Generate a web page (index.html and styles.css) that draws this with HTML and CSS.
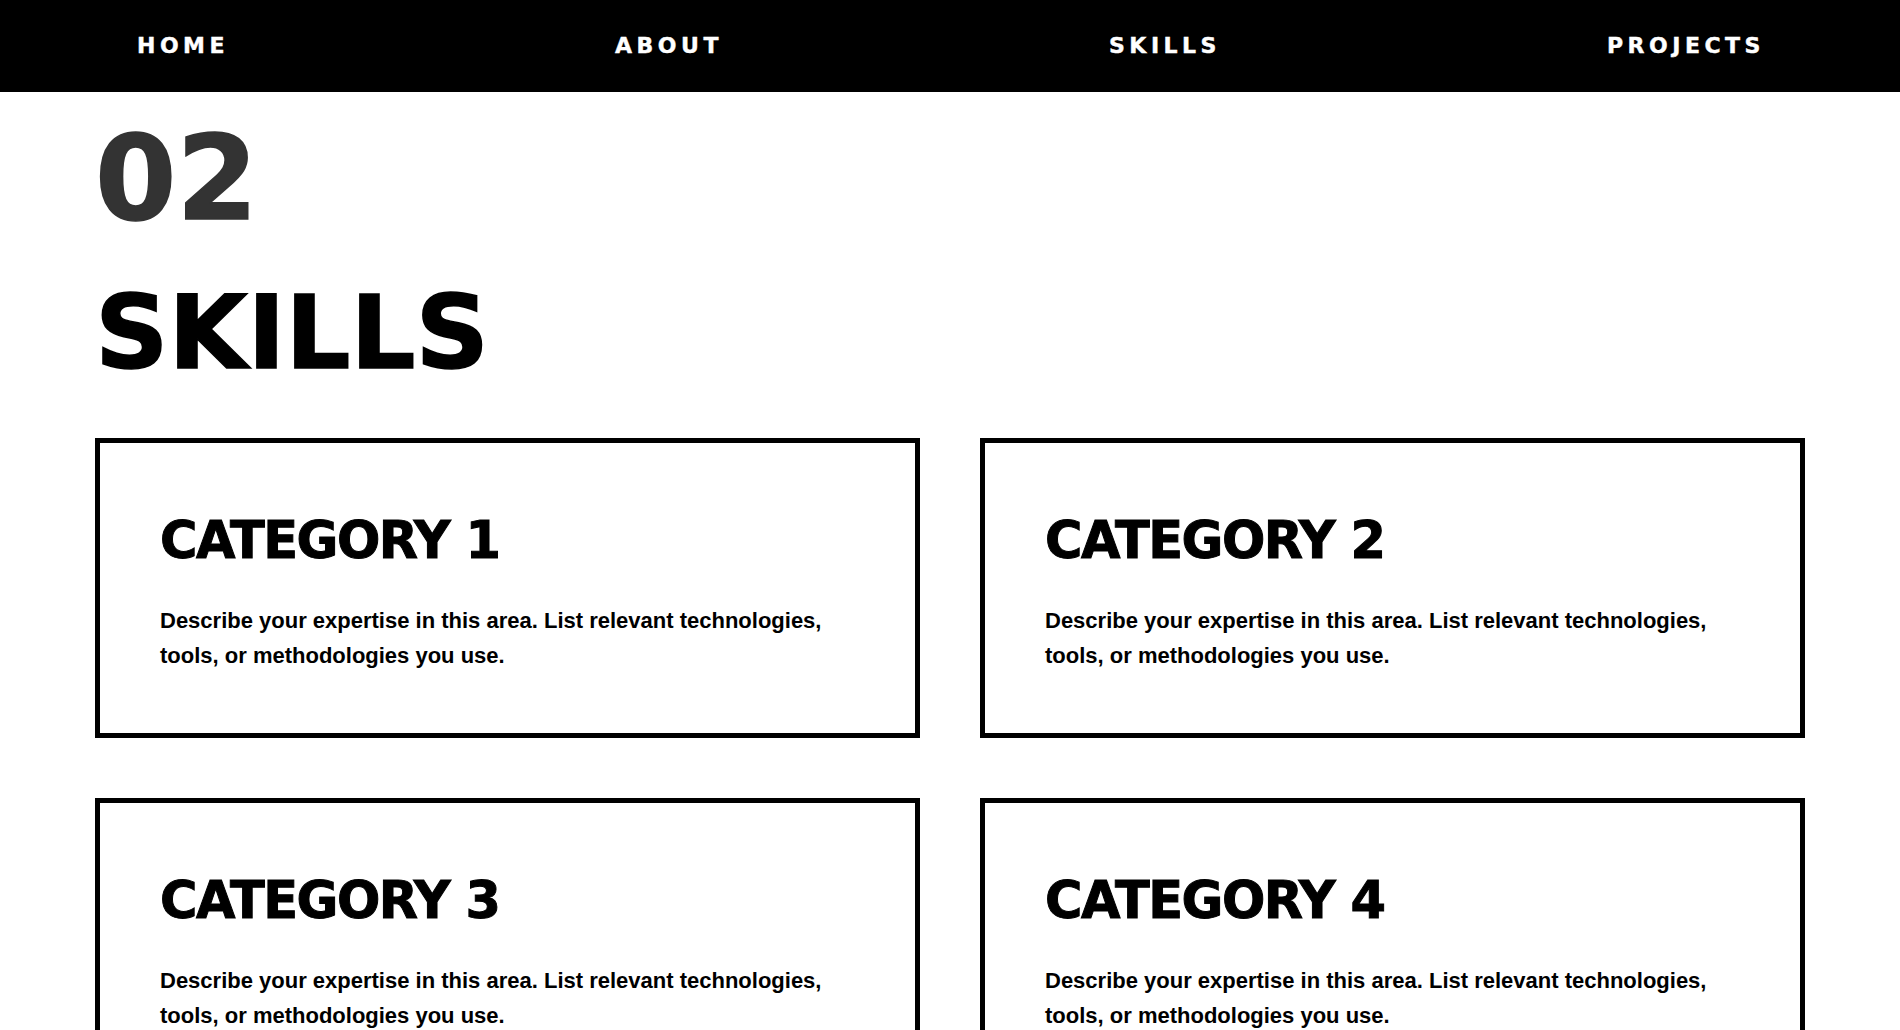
FILE: index.html
```html
<!DOCTYPE html>
<html lang="en">
<head>
<meta charset="utf-8">
<title>Skills</title>
<link rel="stylesheet" href="styles.css">
</head>
<body>
<nav class="topnav">
  <a class="nav-link" href="#home">HOME</a>
  <a class="nav-link" href="#about">ABOUT</a>
  <a class="nav-link" href="#skills">SKILLS</a>
  <a class="nav-link" href="#projects">PROJECTS</a>
</nav>
<section class="skills" id="skills">
  <div class="section-number">02</div>
  <h2 class="section-title">SKILLS</h2>
  <div class="skill-grid">
    <article class="skill-card">
      <h3 class="card-title">CATEGORY 1</h3>
      <p class="card-text">Describe your expertise in this area. List relevant technologies, tools, or methodologies you use.</p>
    </article>
    <article class="skill-card">
      <h3 class="card-title">CATEGORY 2</h3>
      <p class="card-text">Describe your expertise in this area. List relevant technologies, tools, or methodologies you use.</p>
    </article>
    <article class="skill-card">
      <h3 class="card-title">CATEGORY 3</h3>
      <p class="card-text">Describe your expertise in this area. List relevant technologies, tools, or methodologies you use.</p>
    </article>
    <article class="skill-card">
      <h3 class="card-title">CATEGORY 4</h3>
      <p class="card-text">Describe your expertise in this area. List relevant technologies, tools, or methodologies you use.</p>
    </article>
  </div>
</section>
</body>
</html>
```

FILE: styles.css
```css
* {
  box-sizing: border-box;
}

body {
  margin: 0;
  background: #fff;
  color: #000;
  font-family: "Liberation Sans", Arial, sans-serif;
}

.topnav {
  height: 92px;
  background: #000;
  display: flex;
  align-items: center;
  justify-content: space-between;
  padding: 0 135px 0 137px;
}

.nav-link {
  color: #fff;
  text-decoration: none;
  font-family: "DejaVu Sans", sans-serif;
  font-weight: 700;
  font-size: 22px;
  letter-spacing: 4.5px;
  line-height: 1;
  -webkit-text-stroke: 0.4px #fff;
}

.skills {
  padding: 28px 5% 60px;
}

.section-number {
  font-family: "DejaVu Sans", sans-serif;
  font-weight: 700;
  font-size: 117px;
  line-height: 1;
  color: #333;
  -webkit-text-stroke: 1.5px #333;
}

.section-title {
  margin: 45px 0 54px;
  font-family: "DejaVu Sans", sans-serif;
  font-weight: 700;
  font-size: 102px;
  line-height: 1;
  color: #000;
  -webkit-text-stroke: 1.5px #000;
}

.skill-grid {
  display: grid;
  grid-template-columns: 1fr 1fr;
  gap: 60px;
}

.skill-card {
  border: 5px solid #000;
  padding: 67px 60px 60px;
}

.card-title {
  margin: 0 0 32px;
  font-family: "DejaVu Sans", sans-serif;
  font-weight: 700;
  font-size: 51px;
  line-height: 1.2;
  letter-spacing: -1.5px;
  -webkit-text-stroke: 1px #000;
}

.card-text {
  margin: 0;
  font-family: "Liberation Sans", Arial, sans-serif;
  font-weight: 700;
  font-size: 22px;
  line-height: 35px;
}
```
